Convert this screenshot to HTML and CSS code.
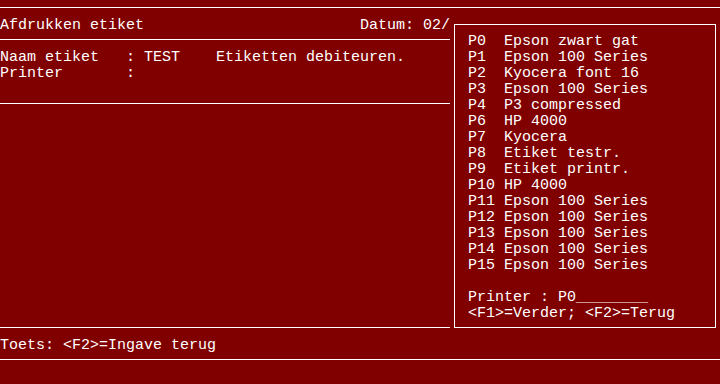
FILE: index.html
```html
<!DOCTYPE html>
<html lang="nl">
<head>
    <meta charset="UTF-8">
    <title>Afdrukken etiket</title>
    <link rel="stylesheet" href="styles.css">
</head>
<body>
    <div class="screen">
        <div class="rule"></div>
        <div class="row">Afdrukken etiket                        Datum: 02/</div>
        <div class="rule half"></div>
        <div class="row">Naam etiket   : TEST    Etiketten debiteuren.</div>
        <div class="row">Printer       :</div>
        <div class="row"></div>
        <div class="rule half"></div>
        <div class="spacer"></div>
        <div class="rule half"></div>
        <div class="row">Toets: &lt;F2&gt;=Ingave terug</div>
        <div class="rule"></div>
        <div class="row"></div>

        <!-- keuzevenster printers -->
        <div class="popup">
            <div class="row">P0  Epson zwart gat</div>
            <div class="row">P1  Epson 100 Series</div>
            <div class="row">P2  Kyocera font 16</div>
            <div class="row">P3  Epson 100 Series</div>
            <div class="row">P4  P3 compressed</div>
            <div class="row">P6  HP 4000</div>
            <div class="row">P7  Kyocera</div>
            <div class="row">P8  Etiket testr.</div>
            <div class="row">P9  Etiket printr.</div>
            <div class="row">P10 HP 4000</div>
            <div class="row">P11 Epson 100 Series</div>
            <div class="row">P12 Epson 100 Series</div>
            <div class="row">P13 Epson 100 Series</div>
            <div class="row">P14 Epson 100 Series</div>
            <div class="row">P15 Epson 100 Series</div>
            <div class="row"></div>
            <div class="row">Printer : P0________</div>
            <div class="row">&lt;F1&gt;=Verder; &lt;F2&gt;=Terug</div>
        </div>
    </div>
</body>
</html>
```

FILE: styles.css
```css
body {
    margin: 0;
    padding: 0;
    background-color: #800000;
}

.screen {
    position: relative;
    width: 720px;
    height: 384px;
    overflow: hidden;
    background-color: #800000;
    color: #ffffff;
    font-family: 'Liberation Mono', 'DejaVu Sans Mono', monospace;
    font-size: 15px;
    line-height: 16px;
    display: flex;
    flex-direction: column;
}

/* een tekstregel van het 80x24 scherm, 16px hoog */
.row {
    height: 16px;
    box-sizing: border-box;
    padding-top: 2px;
    line-height: 16px;
    white-space: pre;
}

.rule {
    height: 16px;
    box-sizing: border-box;
    padding-top: 7px;
}

.rule::after {
    content: "";
    display: block;
    border-top: 1px solid #ffffff;
}

.rule.half {
    width: 450px;
}

.spacer {
    height: 208px;
}

.popup {
    position: absolute;
    left: 454px;
    top: 24px;
    width: 262px;
    box-sizing: border-box;
    padding: 7px 13px 7px 13px;
    border: 1px solid #ffffff;
    background-color: #800000;
}
```
